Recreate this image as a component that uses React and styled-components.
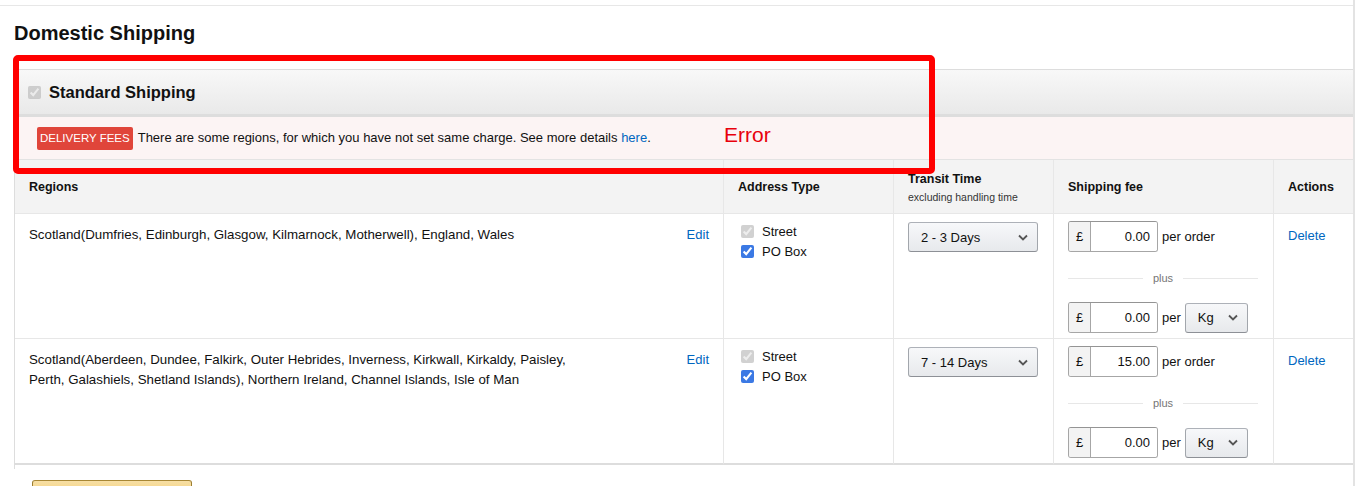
import styled, { createGlobalStyle } from 'styled-components';

const GlobalStyle = createGlobalStyle`
* { box-sizing: border-box; }
body {
    margin: 0;
    background: #FFFFFF;
    font-family: "Liberation Sans", Arial, sans-serif;
    color: #111111;
}
`

const rows = [
    {
        id: 1,
        regions: "Scotland(Dumfries, Edinburgh, Glasgow, Kilmarnock, Motherwell), England, Wales",
        transit: "2 - 3 Days",
        perOrder: "0.00",
        perKg: "0.00"
    },
    {
        id: 2,
        regions: "Scotland(Aberdeen, Dundee, Falkirk, Outer Hebrides, Inverness, Kirkwall, Kirkaldy, Paisley, Perth, Galashiels, Shetland Islands), Northern Ireland, Channel Islands, Isle of Man",
        transit: "7 - 14 Days",
        perOrder: "15.00",
        perKg: "0.00"
    }
]

function Chevron() {
    return (
        <svg width="10" height="7" viewBox="0 0 10 7">
            <polyline points="1,1.5 5,5.5 9,1.5" fill="none" stroke="#555" strokeWidth="1.8" />
        </svg>
    )
}

function Select({ value, width }) {
    return (
        <SelectBox width={width}>
            <span>{value}</span>
            <Chevron />
        </SelectBox>
    )
}

function Money({ value }) {
    return (
        <MoneyGroup>
            <Prefix>£</Prefix>
            <MoneyInput type="text" defaultValue={value} />
        </MoneyGroup>
    )
}

export default function App() {

    return (
        <Page>
            <GlobalStyle />
            <TopRule />
            <Title>Domestic Shipping</Title>

            <Panel>
                <PanelHeader>
                    <Check type="checkbox" checked disabled readOnly />
                    <PanelTitle>Standard Shipping</PanelTitle>
                </PanelHeader>

                <Alert>
                    <Badge>DELIVERY FEES</Badge>
                    <Message>
                        There are some regions, for which you have not set same charge. See more details <Link href="#">here</Link>.
                    </Message>
                </Alert>

                <Table>
                    <HeadCell>Regions</HeadCell>
                    <HeadCell>Address Type</HeadCell>
                    <HeadCell>
                        Transit Time
                        <Sub>excluding handling time</Sub>
                    </HeadCell>
                    <HeadCell>Shipping fee</HeadCell>
                    <HeadCell last>Actions</HeadCell>

                    {
                        rows.map((row, i) => (
                            <Row key={row.id} final={i === rows.length - 1}>
                                <RegionCell>
                                    <RegionText>{row.regions}</RegionText>
                                    <Link href="#">Edit</Link>
                                </RegionCell>
                                <AddressCell>
                                    <Option>
                                        <Check type="checkbox" checked disabled readOnly />
                                        Street
                                    </Option>
                                    <Option>
                                        <Check type="checkbox" defaultChecked />
                                        PO Box
                                    </Option>
                                </AddressCell>
                                <TransitCell>
                                    <Select value={row.transit} width={130} />
                                </TransitCell>
                                <FeeCell>
                                    <FeeLine>
                                        <Money value={row.perOrder} />
                                        <Per>per order</Per>
                                    </FeeLine>
                                    <Divider><span>plus</span></Divider>
                                    <FeeLine>
                                        <Money value={row.perKg} />
                                        <Per>per</Per>
                                        <Select value="Kg" width={63} />
                                    </FeeLine>
                                </FeeCell>
                                <ActionCell>
                                    <Link href="#">Delete</Link>
                                </ActionCell>
                            </Row>
                        ))
                    }
                </Table>

                <AddButton type="button" aria-label="Add new region" />
            </Panel>

            <Highlight />
            <ErrorNote>Error</ErrorNote>
        </Page>
    )
}

const Page = styled.div`
position: relative;
width: 1355px;
height: 486px;
overflow: hidden;
border-right: 2px solid #e3e3e3;
padding-top: 5px;
`
const TopRule = styled.div`
border-top: 1px solid #e7e7e7;
`
const Title = styled.h2`
margin: 15px 0 0 14px;
font-size: 20px;
line-height: 24px;
font-weight: 700;
`
const Panel = styled.div`
margin: 24px 0 0 14px;
border-left: 1px solid #dddddd;
border-top: 1px solid #dddddd;
height: 400px;
`
const PanelHeader = styled.div`
display: flex;
align-items: center;
gap: 8px;
height: 47px;
padding-left: 13px;
background: linear-gradient(#f8f8f8, #e9e9e9);
border-bottom: 3px solid #dddddd;
`
const PanelTitle = styled.span`
font-size: 16.5px;
font-weight: 700;
`
const Check = styled.input`
width: 13px;
height: 13px;
margin: 0;
accent-color: #3b79e4;
`
const Alert = styled.div`
display: flex;
align-items: center;
height: 43px;
padding-left: 22px;
background: #fcf4f4;
border-bottom: 1px solid #e3e3e3;
`
const Message = styled.span`
font-size: 13px;
line-height: 20px;
`
const Badge = styled.span`
background: #e0453a;
color: #FFFFFF;
font-size: 11.5px;
line-height: 23px;
padding: 0 3px;
border-radius: 2px;
margin-right: 5px;
`
const Link = styled.a`
color: #0066c0;
text-decoration: none;
font-size: 13px;
line-height: 20px;
`
const Table = styled.div`
display: grid;
grid-template-columns: 709px 170px 160px 220px 1fr;
`
const HeadCell = styled.div`
display: flex;
flex-direction: column;
justify-content: center;
height: 54px;
padding: 0 14px;
background: #f3f3f3;
border-bottom: 1px solid #e7e7e7;
border-right: ${props => props.last ? "none" : "1px solid #e7e7e7"};
font-size: 12.5px;
font-weight: 700;
line-height: 20px;
`
const Sub = styled.span`
font-size: 10.5px;
font-weight: 400;
color: #333333;
line-height: 16px;
`
const Row = styled.div`
display: contents;

& > div {
    height: ${props => props.final ? "126px" : "125px"};
    border-bottom: ${props => props.final ? "2px solid #dddddd" : "1px solid #e7e7e7"};
    border-right: 1px solid #e7e7e7;
}
& > div:last-child {
    border-right: none;
}
`
const RegionCell = styled.div`
display: flex;
justify-content: space-between;
align-items: flex-start;
padding: 11px 14px;
`
const RegionText = styled.p`
margin: 0;
width: 565px;
font-size: 13.3px;
line-height: 20px;
`
const AddressCell = styled.div`
padding: 7px 17px;
`
const Option = styled.label`
display: flex;
align-items: center;
gap: 8px;
height: 20px;
font-size: 13px;
`
const TransitCell = styled.div`
padding: 8px 14px;
`
const SelectBox = styled.div`
display: flex;
align-items: center;
justify-content: space-between;
width: ${props => props.width}px;
height: 30px;
padding: 0 9px 0 12px;
border: 1px solid #adb1b8;
border-color: #adb1b8 #a2a6ac #8d9096;
border-radius: 3px;
background: linear-gradient(#f7f8fa, #e7e9ec);
font-size: 13px;
`
const FeeCell = styled.div`
padding: 7px 15px 0 14px;
`
const FeeLine = styled.div`
display: flex;
align-items: center;
`
const MoneyGroup = styled.div`
display: flex;
height: 31px;
width: 90px;
border: 1px solid #a6a6a6;
border-top-color: #949494;
border-radius: 3px;
overflow: hidden;
`
const Prefix = styled.span`
display: flex;
align-items: center;
justify-content: center;
width: 23px;
background: #f3f3f3;
border-right: 1px solid #a6a6a6;
font-size: 13px;
`
const MoneyInput = styled.input`
width: 66px;
border: none;
padding: 0 7px 0 0;
text-align: right;
font-family: inherit;
font-size: 13px;
color: #111111;
outline: none;
`
const Per = styled.span`
font-size: 13px;
margin: 0 4px;
`
const Divider = styled.div`
display: flex;
align-items: center;
gap: 10px;
margin: 19px 0 17px 0;
height: 14px;
font-size: 11px;
color: #767676;

&::before, &::after {
    content: "";
    flex: 1;
    border-top: 1px solid #e7e7e7;
}
`
const ActionCell = styled.div`
padding: 11px 14px;
line-height: 20px;
`
const AddButton = styled.button`
display: block;
margin: 15px 0 0 17px;
width: 160px;
height: 30px;
border: 1px solid;
border-color: #a88734 #9c7e31 #846a29;
border-radius: 3px;
background: linear-gradient(#f7dfa5, #f0c14b);
`
const Highlight = styled.div`
position: absolute;
left: 13px;
top: 55px;
width: 922px;
height: 119px;
border: 6px solid #ff0000;
border-radius: 5px;
`
const ErrorNote = styled.span`
position: absolute;
left: 724px;
top: 123px;
font-size: 21px;
color: #e8000b;
`
